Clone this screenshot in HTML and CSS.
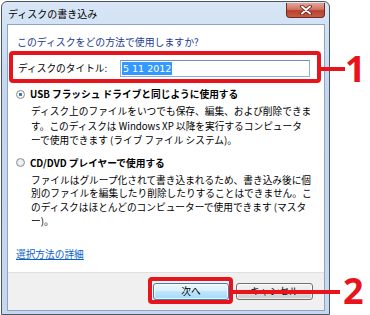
FILE: index.html
```html
<!DOCTYPE html>
<html lang="ja">
<head>
<meta charset="utf-8">
<link rel="stylesheet" href="styles.css">
</head>
<body>
<div class="window">
  <div class="titlebar">
    <span class="title">ディスクの書き込み</span>
    <div class="close">
      <svg width="12" height="10" viewBox="0 0 12 10">
        <path d="M2 1.5 L10 8.5 M10 1.5 L2 8.5" stroke="#5a1a12" stroke-width="3.6" stroke-linecap="round"/>
        <path d="M2 1.5 L10 8.5 M10 1.5 L2 8.5" stroke="#ffffff" stroke-width="2" stroke-linecap="round"/>
      </svg>
    </div>
  </div>
  <div class="client">
    <div class="main">
      <div class="heading">このディスクをどの方法で使用しますか?</div>
      <div class="title-row">
        <span class="label">ディスクのタイトル:</span>
        <div class="input"><span class="sel">5 11 2012</span></div>
      </div>
      <div class="option first">
        <div class="opt-head"><span class="radio checked"></span><span class="opt-title">USB フラッシュ ドライブと同じように使用する</span></div>
        <div class="desc desc1">ディスク上のファイルをいつでも保存、編集、および削除できま<br>す。このディスクは Windows XP 以降を実行するコンピュータ<br>ーで使用できます (ライブ ファイル システム)。</div>
      </div>
      <div class="option second">
        <div class="opt-head"><span class="radio"></span><span class="opt-title">CD/DVD プレイヤーで使用する</span></div>
        <div class="desc desc2">ファイルはグループ化されて書き込まれるため、書き込み後に個<br>別のファイルを編集したり削除したりすることはできません。こ<br>のディスクはほとんどのコンピューターで使用できます (マスタ<br>ー)。</div>
      </div>
      <a class="link" href="#">選択方法の詳細</a>
    </div>
    <div class="footer">
      <div class="btn default">次へ</div>
      <div class="btn">キャンセル</div>
    </div>
  </div>
</div>
<div class="callout-box box1"></div>
<div class="callout-line line1"></div>
<div class="callout-num num1">1</div>
<div class="callout-box box2"></div>
<div class="callout-line line2"></div>
<div class="callout-num num2">2</div>
</body>
</html>
```

FILE: styles.css
```css
* { box-sizing: border-box; }
html, body {
  margin: 0;
  padding: 0;
  background: #ffffff;
  width: 370px;
  height: 315px;
  overflow: hidden;
  font-family: "Noto Sans CJK JP", "Noto Sans", sans-serif;
  font-size: 9.7px;
  color: #000;
}
.window {
  margin: 1px 0 0 1px;
  width: 329px;
  height: 314px;
  border: 1px solid #4b5563;
  border-radius: 6px 6px 0 0;
  background: linear-gradient(#d8e6f6, #c3d6ee 30%, #c5d8ef);
  padding: 0 4px 3px 5px;
  display: flex;
  flex-direction: column;
}
.titlebar {
  height: 22px;
  display: flex;
  justify-content: space-between;
  align-items: flex-start;
}
.title {
  margin-top: 6px;
  margin-left: 1px;
  font-size: 10px;
  line-height: 12px;
  color: #000;
}
.close {
  margin-top: 1px;
  width: 39px;
  height: 15px;
  border: 1px solid #6b2b22;
  border-top: none;
  border-radius: 0 0 4px 4px;
  background: linear-gradient(#e5a497, #d27563 45%, #b8412e 55%, #c65a45);
  display: flex;
  align-items: center;
  justify-content: center;
}
.close svg { display: block; }
.client {
  flex: 1;
  border: 1px solid #8ea4c2;
  background: #fff;
  display: flex;
  flex-direction: column;
}
.main {
  flex: 1;
  padding: 10px 9px 0 9px;
  display: flex;
  flex-direction: column;
  align-items: flex-start;
}
.heading {
  color: #1a3a8f;
  font-size: 9.9px;
  line-height: 15px;
}
.title-row {
  margin-top: 10px;
  margin-left: 1px;
  display: flex;
  align-items: center;
  height: 17px;
}
.label {
  width: 102px;
  line-height: 17px;
}
.input {
  width: 190px;
  height: 17px;
  border: 1px solid #8aaed6;
  border-top-color: #6d8fb9;
  display: flex;
  align-items: center;
  padding-left: 1px;
}
.sel {
  background: #3399ff;
  color: #fff;
  line-height: 13px;
  padding: 0 1px;
  font-family: "DejaVu Sans", "Noto Sans", sans-serif;
  font-size: 9.5px;
}
.option { margin-left: -1px; }
.option.first { margin-top: 10px; }
.option.second { margin-top: 8px; }
.opt-head {
  display: flex;
  align-items: center;
  height: 14px;
}
.radio {
  width: 9px;
  height: 9px;
  border-radius: 50%;
  border: 1px solid #8e8f8f;
  background: radial-gradient(circle, #f4f4f4 30%, #d4d4d4 100%);
  margin-left: 0;
  margin-right: 5px;
  position: relative;
}
.radio.checked {
  background: radial-gradient(circle, #2a5fa0 0, #4a86c8 30%, #ffffff 35%, #e6e6e6 100%);
}
.opt-title {
  font-weight: bold;
  line-height: 14px;
}
.desc {
  margin-left: 15px;
  margin-top: 3px;
}
.desc1 { line-height: 14.5px; }
.desc2 { line-height: 13.8px; margin-top: 4px; }
.link {
  margin-top: 18px;
  margin-left: -1px;
  color: #0a5fc8;
  text-decoration: underline;
  line-height: 14px;
}
.footer {
  height: 38px;
  background: #f0f0f0;
  border-top: 1px solid #dfdfdf;
  display: flex;
  justify-content: flex-end;
  gap: 7px;
  padding: 10px 11px 0 0;
}
.btn {
  width: 77px;
  height: 17px;
  border: 1px solid #707070;
  border-radius: 3px;
  background: linear-gradient(#f2f2f2, #ebebeb 50%, #dddddd 50%, #cfcfcf);
  font-size: 9.7px;
  line-height: 15px;
  text-align: center;
  box-shadow: inset 0 0 0 1px rgba(255,255,255,0.7);
}
.btn.default {
  width: 76px;
  border-color: #3c7fb1;
  background: linear-gradient(#eaf6fd, #d9f0fc 50%, #bee6fd 50%, #a7d9f5);
}
.callout-box {
  position: absolute;
  border: 4px solid #e8141c;
  border-radius: 4px;
}
.box1 { left: 9px; top: 51px; width: 312px; height: 32px; }
.box2 { left: 148px; top: 277px; width: 85px; height: 27px; }
.callout-line {
  position: absolute;
  background: #e8141c;
}
.line1 { left: 321px; top: 67px; width: 24px; height: 4px; }
.line2 { left: 233px; top: 290px; width: 107px; height: 4px; }
.callout-num {
  position: absolute;
  color: #e8141c;
  font-family: "Open Sans", "Liberation Sans", sans-serif;
  font-weight: bold;
  font-size: 36px;
  line-height: 36px;
}
.num1 { left: 345px; top: 51px; }
.num2 { left: 343px; top: 273px; }
```
